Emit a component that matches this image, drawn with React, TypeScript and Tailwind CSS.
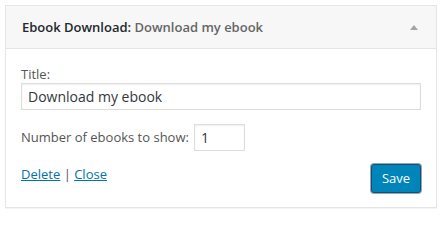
export default function App() {
  return (
    <div className="h-[216px] w-[443px] bg-white pl-[5px] pt-[5px] font-['Open_Sans',sans-serif] text-[13px] text-[#444]">
      <div className="w-[432px] border border-[#e5e5e5] bg-white shadow-[0_1px_1px_rgba(0,0,0,0.04)]">
        <div className="flex h-[43px] items-center justify-between border-b border-[#e5e5e5] bg-[#f7f7f7] pl-[16px] pr-[18px]">
          <h3 className="text-[13px] leading-none font-semibold text-[#23282d]">
            Ebook Download: <span className="text-[#666]">Download my ebook</span>
          </h3>
          <span className="mt-[1px] h-0 w-0 border-x-[4px] border-b-[5px] border-x-transparent border-b-[#a0a5aa]" />
        </div>
        <div className="px-[15px] pt-[17px] pb-[14px]">
          <label className="block leading-[16px] text-[#555]">Title:</label>
          <input
            readOnly
            value="Download my ebook"
            className="mt-[1px] block h-[27px] w-[400px] border border-[#ddd] px-[6px] text-[14px] text-[#32373c] shadow-[inset_0_1px_2px_rgba(0,0,0,0.07)] outline-none"
          />
          <div className="mt-[14px] flex items-center gap-[5px] text-[#555]">
            <span>Number of ebooks to show:</span>
            <input
              readOnly
              value="1"
              className="h-[27px] w-[51px] border border-[#ddd] px-[6px] text-[14px] text-[#32373c] shadow-[inset_0_1px_2px_rgba(0,0,0,0.07)] outline-none"
            />
          </div>
          <div className="mt-[13px] flex items-start justify-between">
            <div className="pt-[1px] leading-[18px] text-[#555]">
              <a href="#" className="text-[#0073aa] underline">Delete</a>
              {" | "}
              <a href="#" className="text-[#0073aa] underline">Close</a>
            </div>
            <button
              type="button"
              className="h-[29px] w-[50px] rounded-[3px] border border-[#1a4e70] bg-[#0085ba] text-[13px] text-white shadow-[0_0_0_1px_rgba(20,60,90,0.45)]"
            >
              Save
            </button>
          </div>
        </div>
      </div>
    </div>
  );
}
